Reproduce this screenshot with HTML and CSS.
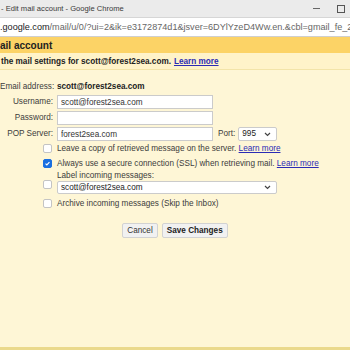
FILE: index.html
```html
<!DOCTYPE html>
<html lang="en">
<head>
    <meta charset="UTF-8">
    <meta name="viewport" content="width=device-width, initial-scale=1.0">
    <title>Edit mail account - Google Chrome</title>
    <link rel="stylesheet" href="styles.css">
</head>
<body>
    <div class="titlebar">
        <span class="window-title">- Edit mail account - Google Chrome</span>
        <span class="window-controls">
            <span class="win-min"></span>
            <span class="win-max"></span>
        </span>
    </div>

    <div class="addressbar">
        <span class="url-host">.google.com</span><span class="url-path">/mail/u/0/?ui=2&amp;ik=e3172874d1&amp;jsver=6DYlYzeD4Ww.en.&amp;cbl=gmail_fe_2</span>
    </div>

    <div class="dialog-header">ail account</div>
    <div class="dialog-sub">
        the mail settings for scott@forest2sea.com. <a href="#" class="link">Learn more</a>
    </div>

    <div class="dialog-body">
        <div class="form-grid">
            <div class="label">Email address:</div>
            <div class="value">scott@forest2sea.com</div>

            <div class="label row-input row-first">Username:</div>
            <div class="row-input row-first"><input class="text-input" type="text" value="scott@forest2sea.com"></div>

            <div class="label row-input">Password:</div>
            <div class="row-input"><input class="text-input" type="password" value=""></div>

            <div class="label row-input">POP Server:</div>
            <div class="row-input pop-row">
                <input class="text-input" type="text" value="forest2sea.com">
                <span class="port-label">Port:</span>
                <div class="fake-select port-select">
                    <span>995</span>
                    <svg width="7" height="5" viewBox="0 0 7 5"><path d="M1 1l2.5 2.5L6 1" fill="none" stroke="#444" stroke-width="1.2"/></svg>
                </div>
            </div>

            <div class="check-cell row-check"><span class="checkbox"></span></div>
            <div class="row-check">Leave a copy of retrieved message on the server. <a href="#" class="link">Learn more</a></div>

            <div class="check-cell row-check">
                <span class="checkbox checked">
                    <svg width="9" height="9" viewBox="0 0 9 9"><path d="M2 4.6l1.7 1.7L7 2.8" fill="none" stroke="#fff" stroke-width="1.5"/></svg>
                </span>
            </div>
            <div class="row-check">Always use a secure connection (SSL) when retrieving mail. <a href="#" class="link">Learn more</a></div>

            <div class="check-cell row-label"><span class="checkbox"></span></div>
            <div class="row-label">
                <div>Label incoming messages:</div>
                <div class="fake-select label-select">
                    <span>scott@forest2sea.com</span>
                    <svg width="7" height="5" viewBox="0 0 7 5"><path d="M1 1l2.5 2.5L6 1" fill="none" stroke="#444" stroke-width="1.2"/></svg>
                </div>
            </div>

            <div class="check-cell row-check row-archive"><span class="checkbox"></span></div>
            <div class="row-check row-archive">Archive incoming messages (Skip the Inbox)</div>
        </div>

        <div class="actions">
            <button class="btn">Cancel</button>
            <button class="btn btn-primary">Save Changes</button>
        </div>
    </div>
</body>
</html>
```

FILE: styles.css
```css
* {
    margin: 0;
    padding: 0;
    box-sizing: border-box;
}

html, body {
    height: 100%;
}

body {
    font-family: "Liberation Sans", Arial, sans-serif;
    font-size: 8.2px;
    color: #3c3c3c;
    background: #fef6d6;
    display: flex;
    flex-direction: column;
    overflow: hidden;
    border-bottom: 3px solid #ead98c;
}

/* chrome window */
.titlebar {
    height: 17px;
    background: #ebebeb;
    display: flex;
    align-items: center;
    justify-content: space-between;
    padding-left: 1px;
    color: #3a3a3a;
    font-size: 7.6px;
    white-space: nowrap;
}

.window-controls {
    display: flex;
    align-items: center;
    gap: 17px;
    padding-right: 5px;
}

.win-min {
    width: 7px;
    height: 1px;
    background: #666;
}

.win-max {
    width: 8px;
    height: 8px;
    border: 1px solid #555;
}

.addressbar {
    height: 20px;
    background: #fff;
    border-top: 1px solid #d6d6d6;
    border-bottom: 1px solid #cfcfcf;
    display: flex;
    align-items: center;
    font-size: 9.1px;
    white-space: nowrap;
    overflow: hidden;
}

.url-host {
    color: #202124;
}

.url-path {
    color: #666;
}

/* dialog */
.dialog-header {
    height: 16px;
    background: #fcd366;
    font-weight: 700;
    font-size: 10px;
    color: #222;
    display: flex;
    align-items: center;
    white-space: nowrap;
}

.dialog-sub {
    height: 17px;
    background: #fff3c9;
    border-bottom: 1px solid #f3e4a8;
    font-weight: 700;
    font-size: 8.2px;
    color: #222;
    display: flex;
    align-items: center;
    gap: 3px;
    padding-left: 1px;
    white-space: nowrap;
}

.link {
    color: #2b2bb5;
    text-decoration: underline;
}

.dialog-body {
    flex: 1;
    padding-top: 10px;
}

.form-grid {
    display: grid;
    grid-template-columns: 53px 1fr;
    column-gap: 4px;
    align-items: center;
}

.label {
    text-align: right;
    white-space: nowrap;
    height: 14px;
    line-height: 14px;
}

.value {
    font-weight: 700;
    color: #222;
    height: 14px;
    line-height: 14px;
}

.row-input {
    margin-top: 2px;
    height: 14px;
    line-height: 14px;
}

.row-input.row-first {
    margin-top: 1px;
}

.text-input {
    width: 156px;
    height: 14px;
    border: 1px solid #cbcbcb;
    background: #fff;
    font-family: inherit;
    font-size: 8.2px;
    color: #333;
    padding: 0 3px;
    outline: none;
    vertical-align: top;
}

.pop-row {
    display: flex;
    align-items: center;
}

.port-label {
    margin-left: 5px;
    margin-right: 3px;
}

.fake-select {
    display: flex;
    align-items: center;
    justify-content: space-between;
    height: 14px;
    border: 1px solid #cbcbcb;
    border-radius: 2px;
    background: #fff;
    padding: 0 5px 0 3px;
    color: #222;
}

.port-select {
    width: 39px;
}

.label-select {
    width: 220px;
    height: 13px;
}

.row-check {
    height: 15px;
    line-height: 15px;
    white-space: nowrap;
}

.row-label {
    height: 24px;
    line-height: 10px;
}

.row-archive {
    margin-top: 1px;
}

.check-cell {
    display: flex;
    align-items: center;
    justify-content: flex-end;
    padding-right: 1px;
}

.check-cell.row-label {
    padding-top: 2px;
}

.checkbox {
    width: 9px;
    height: 9px;
    border: 1px solid #c4c4c4;
    border-radius: 2px;
    background: #fff;
    display: flex;
    align-items: center;
    justify-content: center;
}

.checkbox.checked {
    background: #1a6fe0;
    border-color: #1a6fe0;
}

.actions {
    display: flex;
    justify-content: center;
    gap: 4px;
    margin-top: 12px;
}

.btn {
    height: 15px;
    padding: 0 4px;
    border: 1px solid #d2d2d2;
    border-radius: 2px;
    background: #f1f1f1;
    font-family: inherit;
    font-size: 8.2px;
    color: #333;
    cursor: pointer;
}

.btn-primary {
    font-weight: 700;
    color: #222;
}
```
